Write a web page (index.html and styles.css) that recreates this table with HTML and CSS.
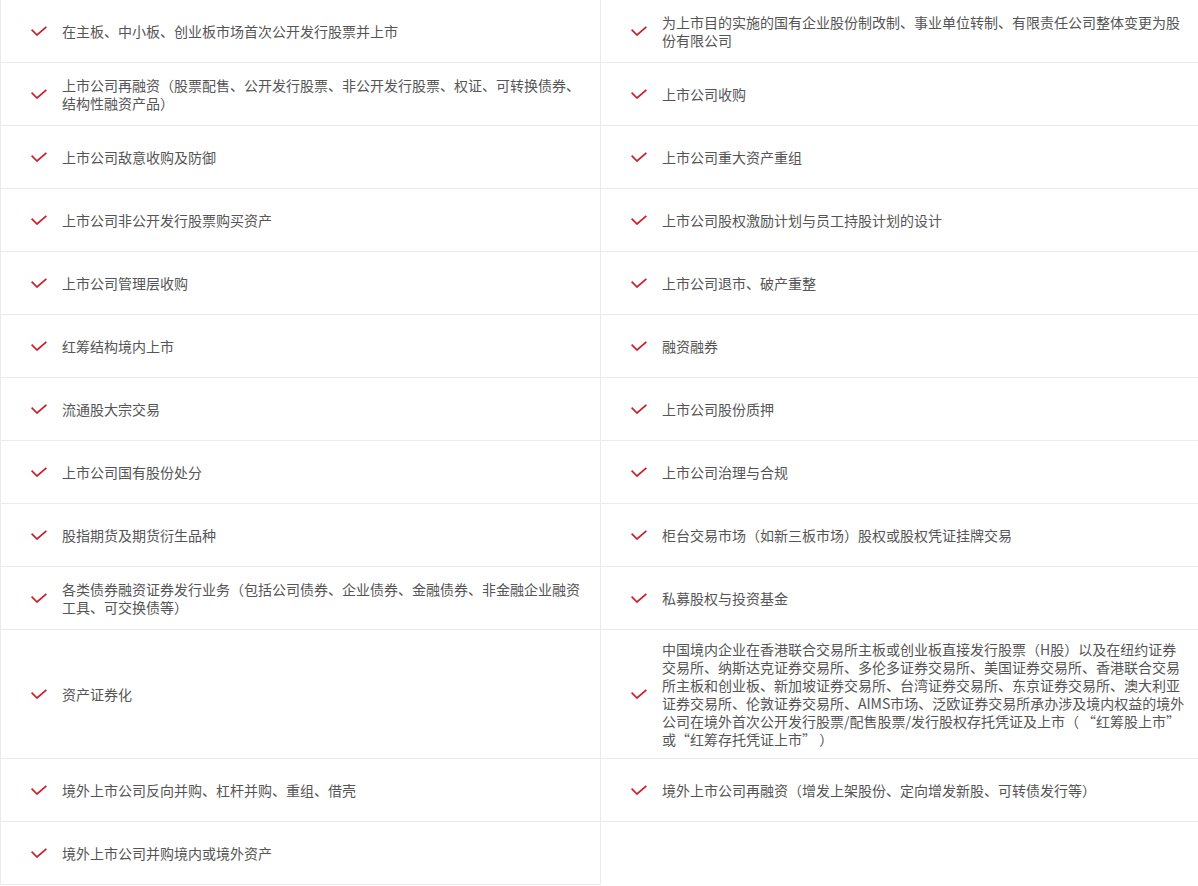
FILE: index.html
```html
<!DOCTYPE html>
<html lang="zh-CN">

<head>
    <meta charset="UTF-8">
    <meta name="viewport" content="width=device-width, initial-scale=1.0">
    <title>业务范围</title>
    <link rel="stylesheet" href="styles.css">
</head>

<body>
    <ul class="scope">
        <li><i class="tick"></i><span>在主板、中小板、创业板市场首次公开发行股票并上市</span></li>
        <li><i class="tick"></i><span>为上市目的实施的国有企业股份制改制、事业单位转制、有限责任公司整体变更为股份有限公司</span></li>
        <li><i class="tick"></i><span>上市公司再融资（股票配售、公开发行股票、非公开发行股票、权证、可转换债券、结构性融资产品）</span></li>
        <li><i class="tick"></i><span>上市公司收购</span></li>
        <li><i class="tick"></i><span>上市公司敌意收购及防御</span></li>
        <li><i class="tick"></i><span>上市公司重大资产重组</span></li>
        <li><i class="tick"></i><span>上市公司非公开发行股票购买资产</span></li>
        <li><i class="tick"></i><span>上市公司股权激励计划与员工持股计划的设计</span></li>
        <li><i class="tick"></i><span>上市公司管理层收购</span></li>
        <li><i class="tick"></i><span>上市公司退市、破产重整</span></li>
        <li><i class="tick"></i><span>红筹结构境内上市</span></li>
        <li><i class="tick"></i><span>融资融券</span></li>
        <li><i class="tick"></i><span>流通股大宗交易</span></li>
        <li><i class="tick"></i><span>上市公司股份质押</span></li>
        <li><i class="tick"></i><span>上市公司国有股份处分</span></li>
        <li><i class="tick"></i><span>上市公司治理与合规</span></li>
        <li><i class="tick"></i><span>股指期货及期货衍生品种</span></li>
        <li><i class="tick"></i><span>柜台交易市场（如新三板市场）股权或股权凭证挂牌交易</span></li>
        <li><i class="tick"></i><span>各类债券融资证券发行业务（包括公司债券、企业债券、金融债券、非金融企业融资工具、可交换债等）</span></li>
        <li><i class="tick"></i><span>私募股权与投资基金</span></li>
        <li><i class="tick"></i><span>资产证券化</span></li>
        <li><i class="tick"></i><span>中国境内企业在香港联合交易所主板或创业板直接发行股票（H股）以及在纽约证券交易所、纳斯达克证券交易所、多伦多证券交易所、美国证券交易所、香港联合交易所主板和创业板、新加坡证券交易所、台湾证券交易所、东京证券交易所、澳大利亚证券交易所、伦敦证券交易所、AIMS市场、泛欧证券交易所承办涉及境内权益的境外公司在境外首次公开发行股票/配售股票/发行股权存托凭证及上市（ “红筹股上市”或“红筹存托凭证上市” ）</span></li>
        <li><i class="tick"></i><span>境外上市公司反向并购、杠杆并购、重组、借壳</span></li>
        <li><i class="tick"></i><span>境外上市公司再融资（增发上架股份、定向增发新股、可转债发行等）</span></li>
        <li><i class="tick"></i><span>境外上市公司并购境内或境外资产</span></li>
    </ul>
</body>

</html>
```

FILE: styles.css
```css
body {
    margin: 0;
    overflow: hidden;
    background: #fff;
    font-family: "Noto Sans CJK SC", "Noto Sans", sans-serif;
}

.scope {
    margin: 0;
    padding: 0;
    width: 1201px;
    list-style: none;
    display: grid;
    grid-template-columns: 600px 600px;
    border-left: 1px solid #ebebeb;
}

.scope li {
    display: flex;
    align-items: center;
    min-height: 42px;
    padding: 10px 8px 10px 30px;
    border-right: 1px solid #ebebeb;
    border-bottom: 1px solid #ebebeb;
    font-size: 14px;
    line-height: 18px;
    color: #555;
}

.scope li span {
    flex: 0 0 524px;
}

.tick {
    flex: none;
    width: 16px;
    height: 10px;
    margin-right: 15px;
    background: url("data:image/svg+xml,%3Csvg xmlns='http://www.w3.org/2000/svg' width='16' height='10' viewBox='0 0 16 10'%3E%3Cpath d='M0.6 3.6 L6 9 L15.4 0.8' fill='none' stroke='%23c8202c' stroke-width='1.7'/%3E%3C/svg%3E") no-repeat;
}
```
